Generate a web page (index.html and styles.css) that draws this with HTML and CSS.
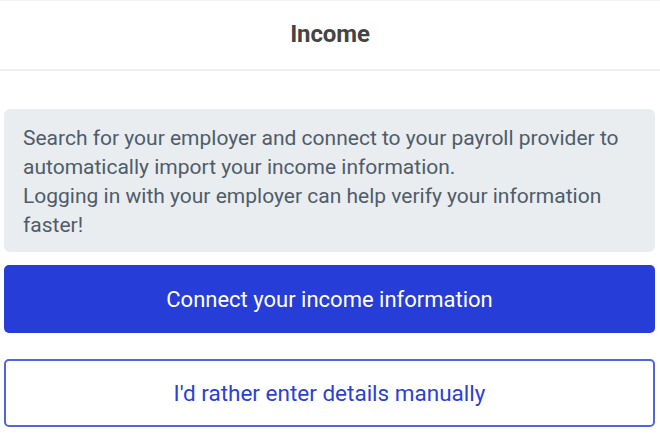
FILE: index.html
```html
<!DOCTYPE html>
<html lang="en">
<head>
<meta charset="utf-8">
<title>Income</title>
<link rel="stylesheet" href="styles.css">
</head>
<body>
<header class="header">
  <h1 class="title">Income</h1>
</header>
<main class="content">
  <div class="info">
    <p>Search for your employer and connect to your payroll provider to automatically import your income information.</p>
    <p>Logging in with your employer can help verify your information faster!</p>
  </div>
  <button class="btn btn-primary" type="button">Connect your income information</button>
  <button class="btn btn-secondary" type="button">I'd rather enter details manually</button>
</main>
</body>
</html>
```
FILE: styles.css
```css
* { box-sizing: border-box; }
html, body { margin: 0; padding: 0; background: #fff; }
body {
  font-family: Roboto, "Liberation Sans", Arial, sans-serif;
  width: 660px;
  height: 438px;
  overflow: hidden;
}
.header {
  height: 71px;
  display: flex;
  align-items: center;
  justify-content: center;
  border-top: 1px solid #f4f4f4;
  border-bottom: 2px solid #efefef;
}
.title {
  margin: 0;
  font-size: 24px;
  font-weight: 700;
  color: #444;
  padding-bottom: 3px;
  letter-spacing: -0.1px;
}
.content {
  padding: 38px 5px 0 4px;
  display: flex;
  flex-direction: column;
}
.info {
  background: #eaedf0;
  border-radius: 6px;
  padding: 15px 19px 12px;
  color: #4f5c69;
  font-size: 21px;
  line-height: 29px;
}
.info p { margin: 0; }
.btn {
  font-family: inherit;
  height: 68px;
  border-radius: 5px;
  font-size: 22px;
  cursor: pointer;
  width: 100%;
}
.btn-primary {
  margin-top: 13px;
  background: #263dd8;
  border: none;
  color: #fff;
}
.btn-secondary {
  margin-top: 26px;
  background: #fff;
  border: 2px solid #5165e3;
  color: #2b40d6;
  font-size: 22.5px;
}
```
